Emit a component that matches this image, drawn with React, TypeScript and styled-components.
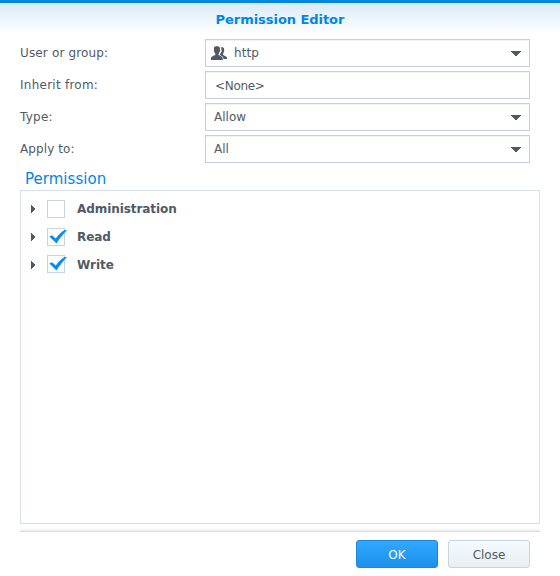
import React from 'react';
import styled, { createGlobalStyle } from 'styled-components';

const GlobalStyle = createGlobalStyle`
  * { box-sizing: border-box; }
  html, body { margin: 0; background: #fff; }
  body { font: 12px/18px Verdana, "DejaVu Sans", sans-serif; color: #505a64; overflow: hidden; }
`;

const Dialog = styled.main`
  display: flex;
  flex-direction: column;
  width: 560px;
  height: 576px;
  border-top: 3px solid #0086e5;
  background: linear-gradient(#d9eaf8, #fff 31px);
`;

const Title = styled.h1`
  margin: 0;
  height: 36px;
  padding-top: 7px;
  font-size: 13px;
  line-height: 20px;
  font-weight: bold;
  letter-spacing: -0.05px;
  text-align: center;
  color: #0086e5;
`;

const Form = styled.div`
  display: grid;
  gap: 4px;
  padding: 0 30px 0 20px;
`;

const FormRow = styled.div`
  display: grid;
  grid-template-columns: 185px 325px;
  height: 28px;
`;

const Label = styled.label<{ $spacing: number }>`
  padding-top: 5px;
  letter-spacing: ${(p) => p.$spacing}px;
`;

const Field = styled.div<{ $text?: boolean }>`
  display: flex;
  align-items: center;
  padding: ${(p) => (p.$text ? '2px 12px 0 9px' : '0 7px 1px 8px')};
  border: 1px solid #c6d0dc;
  box-shadow: inset 0 1px #f0f2f3;
  background: #fff;
`;

const Value = styled.span<{ $spacing?: number }>`
  flex: 1;
  letter-spacing: ${(p) => p.$spacing ?? 0}px;
`;

const UserIcon = styled.svg`
  width: 16px;
  height: 14px;
  margin: 1px 7px 0 -3px;
`;

const Caret = styled.svg`
  width: 11px;
  height: 5px;
  margin-top: 2px;
`;

const SectionTitle = styled.h2`
  margin: 5px 0 0 25px;
  height: 22px;
  font-size: 15px;
  line-height: 22px;
  font-weight: normal;
  letter-spacing: 0.03px;
  color: #0086e5;
`;

const Tree = styled.section`
  width: 520px;
  height: 334px;
  margin-left: 20px;
  padding: 4px 10px;
  border: 1px solid #d4e0ea;
  background: #fff;
`;

const TreeRow = styled.div`
  display: flex;
  align-items: center;
  height: 28px;
`;

const Expander = styled.svg`
  width: 5px;
  height: 8px;
`;

const Checkbox = styled.span<{ $raised?: boolean }>`
  display: block;
  width: 18px;
  height: 18px;
  margin: ${(p) => (p.$raised ? '-2px' : '0')} 12px 0 11px;
  border: 1px solid #c6d4e0;
`;

const CheckMark = styled.svg`
  display: block;
  width: 18px;
  height: 14px;
  margin: 1px 0 0 1px;
  overflow: visible;
`;

const Permission = styled.span<{ $spacing: number }>`
  font-weight: bold;
  letter-spacing: ${(p) => p.$spacing}px;
`;

const Divider = styled.div`
  width: 520px;
  height: 4px;
  margin: 4px 0 0 20px;
  border-bottom: 1px solid #dadcdd;
  background: linear-gradient(#fff, #ededed);
`;

const Footer = styled.footer`
  display: flex;
  justify-content: flex-end;
  gap: 10px;
  padding: 8px 30px 0 0;
`;

const Button = styled.button<{ $primary?: boolean }>`
  width: 82px;
  height: 28px;
  padding: 1px 0 0;
  border: 1px solid ${(p) => (p.$primary ? '#1a87dc' : '#c6d4e0')};
  border-radius: 3px;
  background: ${(p) => (p.$primary ? 'linear-gradient(#33a7ff, #1b91e9)' : 'linear-gradient(#f5fafe, #e9eef2)')};
  color: ${(p) => (p.$primary ? '#fff' : '#505a64')};
  font: inherit;
`;

const DownCaret = () => (
  <Caret viewBox="0 0 11 5" shapeRendering="crispEdges">
    <path d="M0 0h10v1H9v1H8v1H7v1H6v1H4V4H3V3H2V2H1V1H0z" fill="#505a64" />
  </Caret>
);

const PeopleIcon = () => (
  <UserIcon viewBox="0 0 16 14" fill="#505a64">
    <path d="M3.2 1.1C4.1.1 7.8-.4 8.7 1.4c.4.9.1 1.8.2 2.5.7.4.2 1.7-.3 1.9-.2.9-.5 1.5-1 2v1.1c1.3.9 3.9 1.2 4.1 3.1v2H0v-2c.2-1.9 3-2.2 4.3-3.1V7.8c-.5-.5-.8-1.1-1-2-.5-.2-1-1.5-.3-1.9 0-.9-.2-1.8.2-2.8z" />
    <path d="M9.6 1.5c1.1-.5 2.9-.3 3.4 1.1.3.8 0 1.6.1 2.2.3.8-.1 1.3-.5 1.5 0 .8-.4 1.1-.6 1.6v.8c1 1.2 3.6 1.1 4 3V13h-3.4c-.2-2.2-1.8-3-3.6-4V8c.5-.6.8-1 .9-1.7 1-.7 1.1-1.6.5-2.6 0-.8.1-1.6-.8-2.2z" />
  </UserIcon>
);

const fields = [
  { label: 'User or group:', value: 'http', spacing: 0.15, valueSpacing: 0.05, user: true, select: true },
  { label: 'Inherit from:', value: '<None>', spacing: 0.25, valueSpacing: -0.3, user: false, select: false },
  { label: 'Type:', value: 'Allow', spacing: 0.25, valueSpacing: 0, user: false, select: true },
  { label: 'Apply to:', value: 'All', spacing: 0.1, valueSpacing: 0, user: false, select: true },
];

const permissions = [
  { name: 'Administration', checked: false, raised: false, spacing: -0.07 },
  { name: 'Read', checked: true, raised: false, spacing: -0.1 },
  { name: 'Write', checked: true, raised: true, spacing: 0 },
];

export default function App() {
  return (
    <>
      <GlobalStyle />
      <Dialog>
        <Title>Permission Editor</Title>
        <Form>
          {fields.map((f) => (
            <FormRow key={f.label}>
              <Label $spacing={f.spacing}>{f.label}</Label>
              <Field $text={!f.select}>
                {f.user && <PeopleIcon />}
                <Value $spacing={f.valueSpacing}>{f.value}</Value>
                {f.select && <DownCaret />}
              </Field>
            </FormRow>
          ))}
        </Form>
        <SectionTitle>Permission</SectionTitle>
        <Tree>
          {permissions.map((p) => (
            <TreeRow key={p.name}>
              <Expander viewBox="0 0 5 8" shapeRendering="crispEdges">
                <path d="M0 0h1v1h1v1h1v1h1v2H3v1H2v1H1v1H0z" fill="#505a64" />
              </Expander>
              <Checkbox $raised={p.raised}>
                {p.checked && (
                  <CheckMark viewBox="0 0 18 14">
                    <path d="M.3 6.6 3 5.2 6.8 8.4C9.5 5 12.5 2 15.6.1L18 .3C14 4.2 10.8 8.3 7.5 13.6z" fill="#0a8cf0" />
                  </CheckMark>
                )}
              </Checkbox>
              <Permission $spacing={p.spacing}>{p.name}</Permission>
            </TreeRow>
          ))}
        </Tree>
        <Divider />
        <Footer>
          <Button $primary>OK</Button>
          <Button>Close</Button>
        </Footer>
      </Dialog>
    </>
  );
}
